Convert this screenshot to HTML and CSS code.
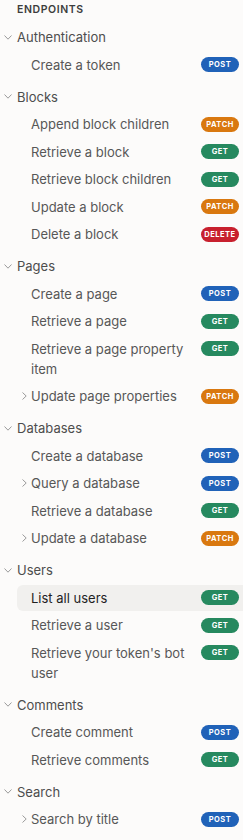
FILE: index.html
```html
<!DOCTYPE html>
<html lang="en">
<head>
    <meta charset="UTF-8">
    <meta name="viewport" content="width=device-width, initial-scale=1.0">
    <title>API Reference - Endpoints</title>
    <link rel="stylesheet" href="styles.css">
</head>
<body>
    <nav class="sidebar">
        <div class="section-title">Endpoints</div>

        <div class="group">
            <div class="group-head"><span class="chev"><svg width="8" height="5" viewBox="0 0 8 5"><polyline points="0.5,0.5 4,4.2 7.5,0.5"/></svg></span>Authentication</div>
            <ul class="items">
                <li class="item"><span class="caret"></span><span class="label">Create a token</span><span class="badge post">POST</span></li>
            </ul>
        </div>

        <div class="group">
            <div class="group-head"><span class="chev"><svg width="8" height="5" viewBox="0 0 8 5"><polyline points="0.5,0.5 4,4.2 7.5,0.5"/></svg></span>Blocks</div>
            <ul class="items">
                <li class="item"><span class="caret"></span><span class="label">Append block children</span><span class="badge patch">PATCH</span></li>
                <li class="item"><span class="caret"></span><span class="label">Retrieve a block</span><span class="badge get">GET</span></li>
                <li class="item"><span class="caret"></span><span class="label">Retrieve block children</span><span class="badge get">GET</span></li>
                <li class="item"><span class="caret"></span><span class="label">Update a block</span><span class="badge patch">PATCH</span></li>
                <li class="item"><span class="caret"></span><span class="label">Delete a block</span><span class="badge delete">DELETE</span></li>
            </ul>
        </div>

        <div class="group">
            <div class="group-head"><span class="chev"><svg width="8" height="5" viewBox="0 0 8 5"><polyline points="0.5,0.5 4,4.2 7.5,0.5"/></svg></span>Pages</div>
            <ul class="items">
                <li class="item"><span class="caret"></span><span class="label">Create a page</span><span class="badge post">POST</span></li>
                <li class="item"><span class="caret"></span><span class="label">Retrieve a page</span><span class="badge get">GET</span></li>
                <li class="item"><span class="caret"></span><span class="label">Retrieve a page property item</span><span class="badge get">GET</span></li>
                <li class="item"><span class="caret"><svg width="5" height="8" viewBox="0 0 5 8"><polyline points="0.5,0.5 4.2,4 0.5,7.5"/></svg></span><span class="label">Update page properties</span><span class="badge patch">PATCH</span></li>
            </ul>
        </div>

        <div class="group">
            <div class="group-head"><span class="chev"><svg width="8" height="5" viewBox="0 0 8 5"><polyline points="0.5,0.5 4,4.2 7.5,0.5"/></svg></span>Databases</div>
            <ul class="items">
                <li class="item"><span class="caret"></span><span class="label">Create a database</span><span class="badge post">POST</span></li>
                <li class="item"><span class="caret"><svg width="5" height="8" viewBox="0 0 5 8"><polyline points="0.5,0.5 4.2,4 0.5,7.5"/></svg></span><span class="label">Query a database</span><span class="badge post">POST</span></li>
                <li class="item"><span class="caret"></span><span class="label">Retrieve a database</span><span class="badge get">GET</span></li>
                <li class="item"><span class="caret"><svg width="5" height="8" viewBox="0 0 5 8"><polyline points="0.5,0.5 4.2,4 0.5,7.5"/></svg></span><span class="label">Update a database</span><span class="badge patch">PATCH</span></li>
            </ul>
        </div>

        <div class="group">
            <div class="group-head"><span class="chev"><svg width="8" height="5" viewBox="0 0 8 5"><polyline points="0.5,0.5 4,4.2 7.5,0.5"/></svg></span>Users</div>
            <ul class="items">
                <li class="item active"><span class="caret"></span><span class="label">List all users</span><span class="badge get">GET</span></li>
                <li class="item"><span class="caret"></span><span class="label">Retrieve a user</span><span class="badge get">GET</span></li>
                <li class="item"><span class="caret"></span><span class="label">Retrieve your token's bot user</span><span class="badge get">GET</span></li>
            </ul>
        </div>

        <div class="group">
            <div class="group-head"><span class="chev"><svg width="8" height="5" viewBox="0 0 8 5"><polyline points="0.5,0.5 4,4.2 7.5,0.5"/></svg></span>Comments</div>
            <ul class="items">
                <li class="item"><span class="caret"></span><span class="label">Create comment</span><span class="badge post">POST</span></li>
                <li class="item"><span class="caret"></span><span class="label">Retrieve comments</span><span class="badge get">GET</span></li>
            </ul>
        </div>

        <div class="group">
            <div class="group-head"><span class="chev"><svg width="8" height="5" viewBox="0 0 8 5"><polyline points="0.5,0.5 4,4.2 7.5,0.5"/></svg></span>Search</div>
            <ul class="items">
                <li class="item"><span class="caret"><svg width="5" height="8" viewBox="0 0 5 8"><polyline points="0.5,0.5 4.2,4 0.5,7.5"/></svg></span><span class="label">Search by title</span><span class="badge post">POST</span></li>
            </ul>
        </div>
    </nav>
</body>
</html>
```

FILE: styles.css
```css
body, html {
    margin: 0;
    padding: 0;
    background-color: #fcfbfa;
    font-family: 'Inter', 'Noto Sans', sans-serif;
    color: #555;
}

.sidebar {
    width: 243px;
    overflow: hidden;
}

.section-title {
    padding: 2px 0 0 17px;
    height: 20.5px;
    line-height: 16px;
    font-size: 10.5px;
    font-weight: 600;
    letter-spacing: 0.6px;
    text-transform: uppercase;
    color: #3d3d3d;
}

.group + .group {
    margin-top: 6px;
}

.group-head {
    display: flex;
    align-items: center;
    margin-top: 1.5px;
    height: 26px;
    padding-left: 4px;
    font-size: 13px;
    line-height: 20px;
    color: #4d4d4d;
}

.chev {
    width: 13px;
    display: flex;
    align-items: center;
}

.chev svg,
.caret svg {
    fill: none;
    stroke: #9a9a9a;
    stroke-width: 1;
}

.items {
    list-style: none;
    margin: 0;
    padding: 0;
}

.item {
    display: flex;
    align-items: flex-start;
    margin: 1.5px 0 0 17px;
    padding: 3px 4px 3px 3px;
    min-height: 20px;
    border-radius: 6px 0 0 6px;
    font-size: 13px;
    line-height: 20px;
    color: #575757;
}

.item.active {
    background-color: #f1f0ee;
    color: #1f1f1f;
}

.caret {
    flex: none;
    width: 11px;
    height: 20px;
    display: flex;
    align-items: center;
}

.caret svg {
    margin-left: 2px;
}

.label {
    flex: 1;
    padding-right: 8px;
}

.badge {
    flex: none;
    width: 38px;
    height: 15px;
    margin-top: 2.5px;
    border-radius: 8px;
    text-align: center;
    font-size: 7.5px;
    line-height: 15px;
    font-weight: 700;
    letter-spacing: 0.5px;
    color: #fff;
}

.badge.post { background-color: #2062b8; }
.badge.get { background-color: #26895f; }
.badge.patch { background-color: #d9780f; }
.badge.delete { background-color: #c8202e; }
```
